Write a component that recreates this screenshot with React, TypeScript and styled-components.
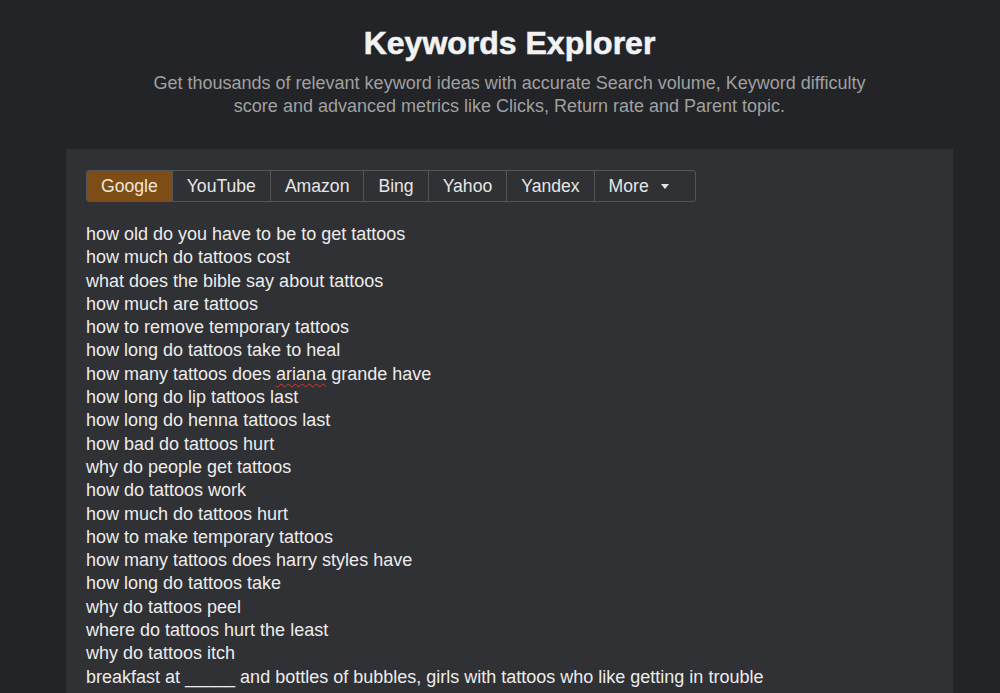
import * as React from "react";
import styled, { createGlobalStyle } from "styled-components";

const GlobalStyle = createGlobalStyle`
  html, body {
    margin: 0;
    padding: 0;
    background: #232427;
    font-family: "Liberation Sans", Arial, sans-serif;
  }
`;

const Page = styled.div`
  box-sizing: border-box;
  width: 1000px;
  height: 693px;
  overflow: hidden;
  background: #232427;
  padding-left: 19px;
  display: flex;
  flex-direction: column;
  align-items: center;
`;

const Title = styled.h1`
  margin: 25px 0 0;
  font-size: 32px;
  font-weight: 700;
  color: #f2f2f2;
  line-height: 36px;
  -webkit-text-stroke: 0.6px #f2f2f2;
`;

const Subtitle = styled.p`
  margin: 11px 0 0;
  width: 730px;
  text-align: center;
  font-size: 18px;
  line-height: 23px;
  color: #a0a0a0;
`;

const Panel = styled.div`
  box-sizing: border-box;
  margin-top: 31px;
  width: 887px;
  flex: 1;
  background: #303134;
  padding: 21px 20px 0;
`;

const Tabs = styled.div`
  display: inline-flex;
  border: 1px solid #54565a;
  border-radius: 3px;
  overflow: hidden;
  height: 30px;
`;

const Tab = styled.div<{ $active?: boolean }>`
  display: flex;
  align-items: center;
  gap: 12px;
  padding: 0 14px;
  font-size: 17.6px;
  color: ${(p) => (p.$active ? "#f0e6da" : "#e6e6e6")};
  background: ${(p) => (p.$active ? "#7d4d15" : "transparent")};
  border-left: ${(p) => (p.$active ? "none" : "1px solid #54565a")};
  &:first-child {
    border-left: none;
  }
`;

const Caret = styled.span`
  width: 0;
  height: 0;
  border-left: 4px solid transparent;
  border-right: 4px solid transparent;
  border-top: 5px solid #e6e6e6;
  margin-right: 12px;
`;

const List = styled.ul`
  list-style: none;
  margin: 21px 0 0;
  padding: 0;
`;

const Item = styled.li`
  font-size: 18px;
  line-height: 23.3px;
  color: #ececec;
  white-space: nowrap;
`;

const Misspelled = styled.span`
  text-decoration: underline wavy #d23a3a;
  text-decoration-thickness: 1px;
  text-underline-offset: 3px;
`;

const keywords = [
  "how old do you have to be to get tattoos",
  "how much do tattoos cost",
  "what does the bible say about tattoos",
  "how much are tattoos",
  "how to remove temporary tattoos",
  "how long do tattoos take to heal",
  "ARIANA",
  "how long do lip tattoos last",
  "how long do henna tattoos last",
  "how bad do tattoos hurt",
  "why do people get tattoos",
  "how do tattoos work",
  "how much do tattoos hurt",
  "how to make temporary tattoos",
  "how many tattoos does harry styles have",
  "how long do tattoos take",
  "why do tattoos peel",
  "where do tattoos hurt the least",
  "why do tattoos itch",
  "breakfast at _____ and bottles of bubbles, girls with tattoos who like getting in trouble",
];

const engines = ["Google", "YouTube", "Amazon", "Bing", "Yahoo", "Yandex"];

export default function App() {
  return (
    <>
      <GlobalStyle />
      <Page>
        <Title>Keywords Explorer</Title>
        <Subtitle>
          Get thousands of relevant keyword ideas with accurate Search volume, Keyword difficulty
          score and advanced metrics like Clicks, Return rate and Parent topic.
        </Subtitle>
        <Panel>
          <Tabs>
            {engines.map((e, i) => (
              <Tab key={e} $active={i === 0}>
                {e}
              </Tab>
            ))}
            <Tab>
              More <Caret />
            </Tab>
          </Tabs>
          <List>
            {keywords.map((k) =>
              k === "ARIANA" ? (
                <Item key={k}>
                  how many tattoos does <Misspelled>ariana</Misspelled> grande have
                </Item>
              ) : (
                <Item key={k}>{k}</Item>
              )
            )}
          </List>
        </Panel>
      </Page>
    </>
  );
}
